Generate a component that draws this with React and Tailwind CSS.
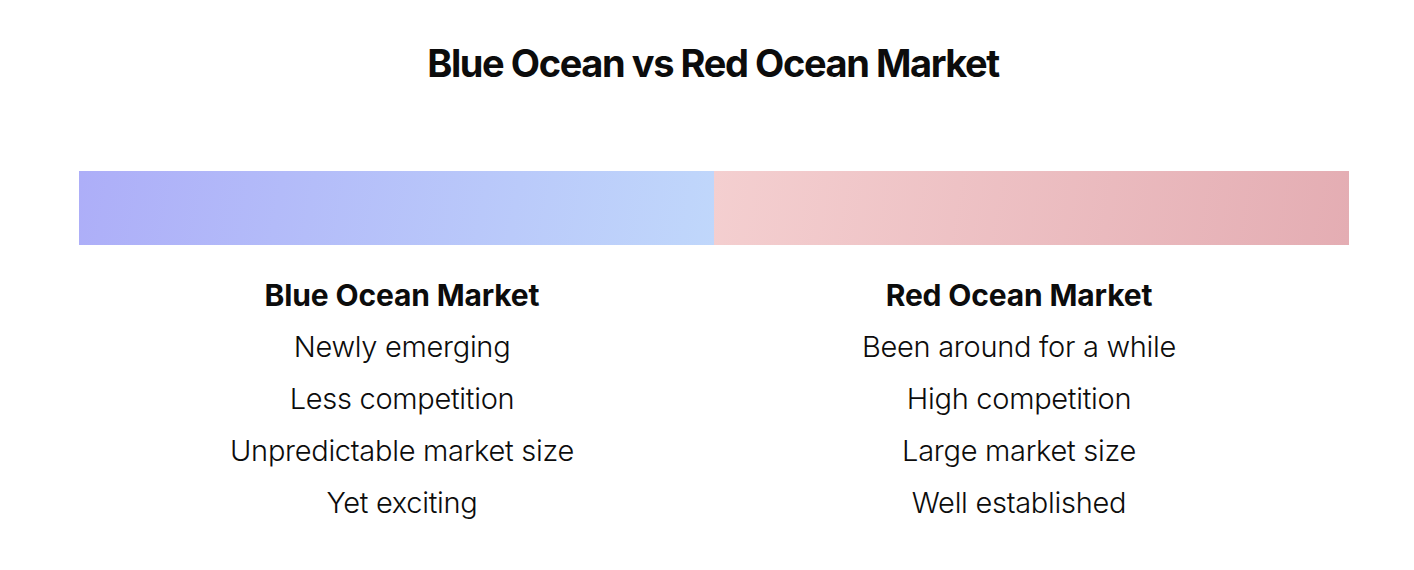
import React from 'react';

const blue = ['Newly emerging', 'Less competition', 'Unpredictable market size', 'Yet exciting'];
const red = ['Been around for a while', 'High competition', 'Large market size', 'Well established'];

const Column = ({ title, items }) => (
  <div className="flex flex-col items-center text-center">
    <h3 className="text-[30px] font-bold leading-[52px] tracking-[-0.005em]">{title}</h3>
    {items.map((item) => (
      <p key={item} className="text-[29px] font-light leading-[52px] tracking-[-0.01em]">
        {item}
      </p>
    ))}
  </div>
);

const App = () => {
  return (
    <div className="w-[1414px] h-[570px] bg-white text-[#0c0c0c] font-['Inter',sans-serif] pt-[38px]">
      <h1 className="pl-[12px] text-center text-[38px] font-bold leading-[50px] tracking-[-0.037em]">
        Blue Ocean vs Red Ocean Market
      </h1>

      <div className="ml-[79px] mt-[83px] flex h-[74px] w-[1270px]">
        <div className="flex-1 bg-[linear-gradient(100deg,#adaef8,#c0d7fb)]" />
        <div className="flex-1 bg-[linear-gradient(100deg,#f4cfd0,#e4adb3)]" />
      </div>

      <div className="ml-[102px] mt-[24px] grid w-[1217px] grid-cols-2 gap-[17px]">
        <Column title="Blue Ocean Market" items={blue} />
        <Column title="Red Ocean Market" items={red} />
      </div>
    </div>
  );
};

export default App;
